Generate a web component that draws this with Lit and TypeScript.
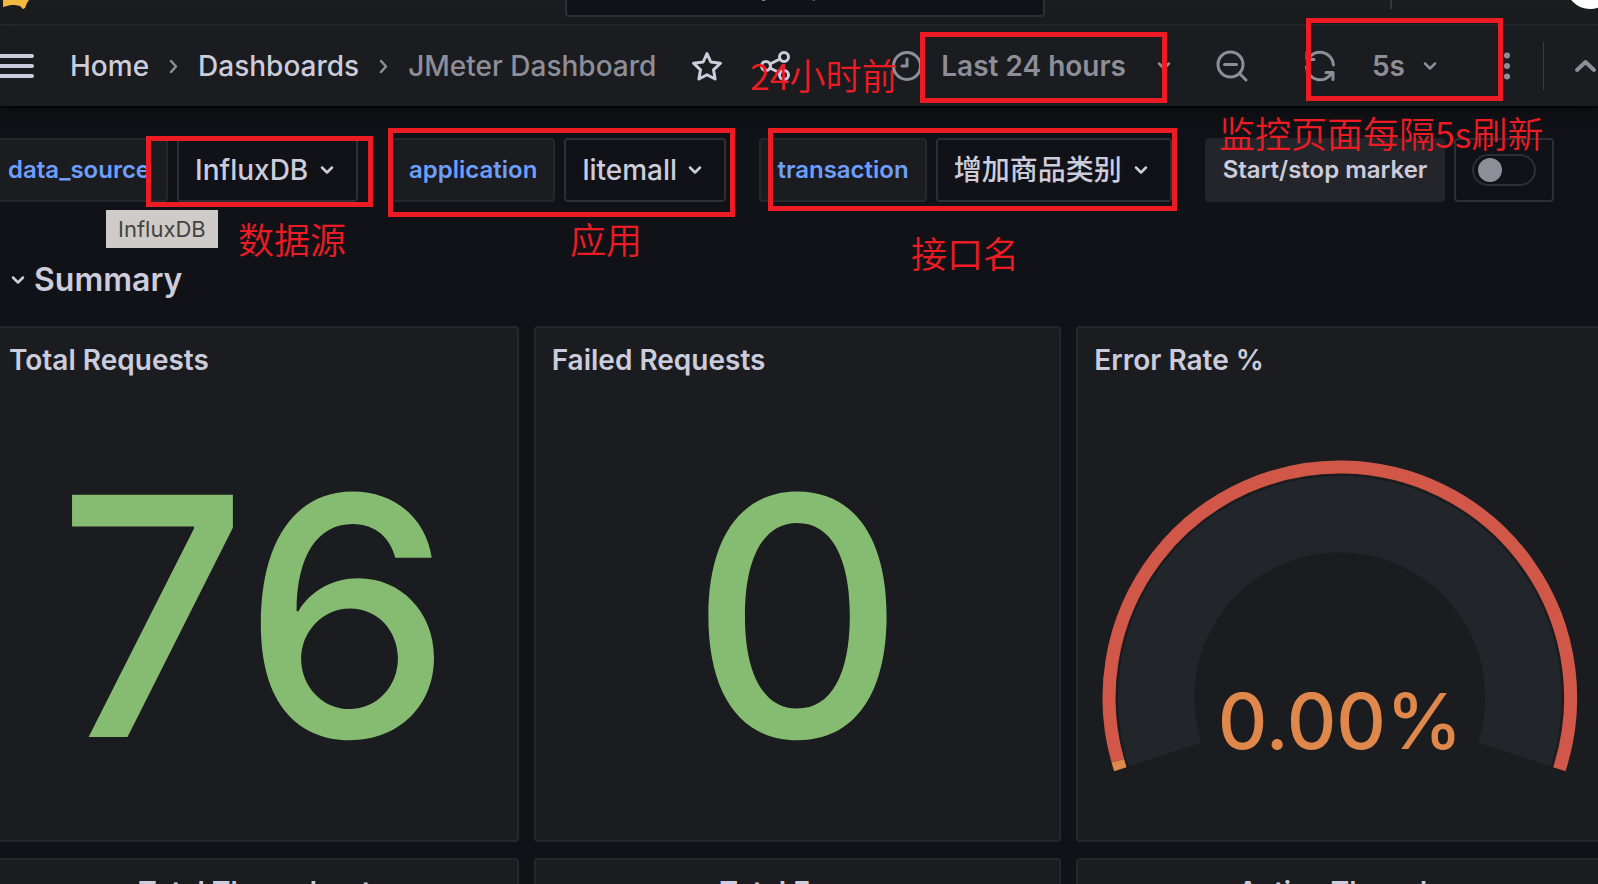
import { LitElement, html, svg, css } from "lit";
import { customElement } from "lit/decorators.js";

const arc = (cx: number, cy: number, r: number, from: number, to: number) => {
  const pt = (deg: number) => {
    const a = (deg * Math.PI) / 180;
    return `${(cx + r * Math.cos(a)).toFixed(2)} ${(cy - r * Math.sin(a)).toFixed(2)}`;
  };
  return `M${pt(from)}A${r} ${r} 0 ${from - to > 180 ? 1 : 0} 1 ${pt(to)}`;
};

const icons = {
  chevron: svg`<path d="M2 2.500l5 5 5-5"/>`,
  crumb: svg`<path d="M2 2l5 5.500-5 5.500"/>`,
};

const chevron = html`<svg class="chev" viewBox="0 0 14 10" aria-hidden="true">${icons.chevron}</svg>`;
const crumb = html`<svg class="crumb" viewBox="0 0 9 15" aria-hidden="true">${icons.crumb}</svg>`;

@customElement("error-gauge")
export class ErrorGauge extends LitElement {
  static styles = css`
    :host { display: block; position: relative; }
    svg { display: block; width: 100%; }
    .value {
      position: absolute; left: 0; right: 0; bottom: 12px;
      text-align: center; font-size: 77px; line-height: 80px; font-weight: 500; color: #e0884b;
    }
  `;
  render() {
    return html`
      <svg viewBox="0 0 474 312" aria-hidden="true" fill="none">
        <path d=${arc(237, 237, 183, 198, -18)} stroke="#222529" stroke-width="76" />
        <path d=${arc(237, 237, 230, 195.84, -18)} stroke="#d15849" stroke-width="13" />
        <path d=${arc(237, 237, 230, 198, 195.84)} stroke="#e0884b" stroke-width="13" />
      </svg>
      <div class="value">0.00%</div>
    `;
  }
}

@customElement("app-root")
export class AppRoot extends LitElement {
  static styles = css`
    :host {
      display: block; position: relative; height: 100vh; overflow: hidden;
      background: #111217; color: #ccccdc;
      font-family: Inter, "Noto Sans CJK SC", sans-serif;
      font-size: 28px; line-height: 36px; font-weight: 500;
    }
    * { box-sizing: border-box; }
    a { color: inherit; text-decoration: none; }
    button, select, input { font: inherit; color: inherit; margin: 0; }
    button { background: none; border: 0; padding: 0; display: flex; align-items: center; }
    svg { fill: none; stroke: currentColor; stroke-width: 3; stroke-linecap: round; stroke-linejoin: round; flex: none; display: block; }
    .grow { flex: 1; }
    .chev { width: 14px; height: 10px; stroke-width: 2.5; }
    .crumb { width: 9px; height: 15px; color: #8e8e99; stroke-width: 2.5; }
    .icon { width: 32px; height: 32px; }

    .top {
      height: 26px; background: #1b1c1f; border-bottom: 2px solid #292a2e;
      display: flex; align-items: flex-end; justify-content: space-between;
      overflow: hidden; padding-left: 1px;
    }
    .logo { width: 30px; height: 24px; stroke: none; }
    .search {
      width: 480px; height: 64px; margin-bottom: 7px; margin-left: 188px;
      background: #111217; border: 2px solid #2e2f34; border-radius: 4px;
      padding: 0 60px; font-weight: 400;
    }
    .search::placeholder { color: #8e8e99; opacity: 1; }
    .side { display: flex; align-items: flex-end; padding-bottom: 15px; margin-right: -16px; }
    .bar { width: 2px; height: 40px; background: #36373c; margin-right: 174px; }
    .avatar { width: 48px; height: 48px; border-radius: 50%; background: #fff; }

    .nav {
      height: 80px; background: #1b1c1f; display: flex; align-items: center;
      box-shadow: 0 1px 2px #000, 0 6px 16px rgba(0, 0, 0, 0.4);
      position: relative;
    }
    .menu { width: 36px; margin-right: 34px; }
    .menu svg { width: 36px; height: 24px; stroke-width: 4; }
    .crumbs { display: flex; align-items: center; gap: 20px; margin-right: 35px; }
    .current { color: #8e8e99; }
    .tools { display: flex; align-items: center; color: #8e8e99; font-weight: 600; }
    .fav { margin-right: 36px; }
    .range svg.icon { margin-right: 18px; }
    .range .chev { margin-left: 31px; }
    .zoom { margin-left: 45px; }
    .sync { margin-left: 56px; }
    .every { margin-left: 36px; gap: 18px; }
    .more { margin-left: 54px; }
    .dots { width: 32px; height: 32px; fill: currentColor; stroke: none; }
    .rule { width: 1px; height: 48px; background: #3a3b40; margin: 0 30px 0 20px; }
    .up { width: 24px; height: 14px; stroke-width: 4; }

    .vars { display: flex; gap: 33px; padding: 32px 0 0; margin-left: -10px; }
    .var { display: flex; gap: 9px; }
    .label {
      height: 64px; padding: 0 16px; display: flex; align-items: center; white-space: nowrap;
      font-size: 24px; font-weight: 600; color: #6e9fff;
      background: #1b1c1f; border: 2px solid #26272b; border-radius: 4px;
    }
    .marker { color: #ccccdc; background: #24252b; border-color: #24252b; }
    .pick { display: grid; align-items: center; justify-items: end; }
    .pick > * { grid-area: 1 / 1; }
    .pick .chev { margin-right: 24px; pointer-events: none; }
    .pick select {
      appearance: none; height: 64px; padding: 0 47px 0 16px;
      background: #111217; border: 2px solid #2e2f34; border-radius: 4px;
    }
    .switch {
      height: 64px; width: 100px; display: grid; place-items: center;
      border: 2px solid #2e2f34; border-radius: 4px;
    }
    .switch input {
      appearance: none; width: 64px; height: 32px; border: 2px solid #2e2f34; border-radius: 16px;
      display: flex; align-items: center; padding: 0 4px;
    }
    .switch input::before { content: ""; width: 24px; height: 24px; border-radius: 50%; background: #8e8e99; }

    .summary { margin: 60px 0 28px 11px; }
    .summary button { gap: 9px; }
    .summary h2 { margin: 0; font-size: 32px; line-height: 36px; font-weight: 600; }

    .grid { display: grid; grid-template-columns: repeat(3, 1fr); gap: 16px 15px; margin: 0 -6px 0 -9px; }
    .panel { background: #1b1c1f; border: 2px solid #26272b; border-radius: 4px; height: 516px; display: flex; flex-direction: column; }
    .panel h3 { margin: 0; padding: 14px 16px; font-size: 28px; line-height: 36px; font-weight: 600; }
    .centered { text-align: center; }
    .stat { flex: 1; display: grid; place-items: center; font-size: 333px; line-height: 400px; font-weight: 500; color: #86bc72; }
    error-gauge { margin: 68px 24px 0; }

    .box { position: absolute; border: 5px solid #ed1c24; pointer-events: none; }
    .note { position: absolute; color: #ed1c24; font: 350 36px/40px "Noto Sans CJK SC", sans-serif; white-space: nowrap; }
    .tip {
      position: absolute; left: 106px; top: 210px; padding: 0 12px; background: #cfcbc8; color: #434340;
      font-size: 22px; line-height: 38px; font-weight: 400;
    }
    .b1 { left: 146px; top: 136px; width: 227px; height: 71px; }
    .b2 { left: 388px; top: 128px; width: 347px; height: 89px; }
    .b3 { left: 768px; top: 128px; width: 409px; height: 83px; }
    .b4 { left: 920px; top: 32px; width: 247px; height: 71px; }
    .b5 { left: 1306px; top: 18px; width: 197px; height: 83px; }
    .n1 { left: 238px; top: 218px; }
    .n2 { left: 570px; top: 218px; }
    .n3 { left: 911px; top: 232px; }
    .n4 { left: 750px; top: 54px; }
    .n5 { left: 1219px; top: 112px; }
  `;

  private variable(id: string, value: string) {
    return html`<div class="var">
      <label class="label" for=${id}>${id}</label>
      <div class="pick">
        <select id=${id}><option>${value}</option></select>
        ${chevron}
      </div>
    </div>`;
  }

  render() {
    return html`
      <header>
        <div class="top">
          <svg class="logo" viewBox="0 0 30 24" aria-hidden="true">
            <path fill="#f2b840" d="M2 0H28L26 3 24 8 22 9 19 6 14 5 10 5 6 6 2 7Z" />
          </svg>
          <input class="search" type="text" placeholder="Search or jump to..." aria-label="Search" />
          <div class="side"><span class="bar"></span><span class="avatar"></span></div>
        </div>
        <div class="nav">
          <button class="menu" aria-label="Menu">
            <svg viewBox="0 0 36 24"><path d="M0 2H32M0 12H32M0 22H32" /></svg>
          </button>
          <nav class="crumbs" aria-label="Breadcrumbs">
            <a href="#home">Home</a>${crumb}<a href="#dashboards">Dashboards</a>${crumb}<span class="current">JMeter Dashboard</span>
          </nav>
          <button class="fav" aria-label="Favourite">
            <svg class="icon" viewBox="0 0 32 32"><path d="M16 3.500l3.800 8.500 9.700 1.200-7 6.600 1.600 9.200-8.100-4.300-8.100 4.300 1.600-9.200-7-6.600 9.700-1.200z" /></svg>
          </button>
          <button aria-label="Share">
            <svg class="icon" viewBox="0 0 32 32"><circle cx="7" cy="16" r="4.500"/><circle cx="25" cy="7" r="4.500"/><circle cx="25" cy="25" r="4.500"/><path d="M11 14l10-5M11 18l10 5" /></svg>
          </button>
          <div class="grow"></div>
          <div class="tools">
            <button class="range">
              <svg class="icon" viewBox="0 0 32 32"><circle cx="16" cy="16" r="13.500"/><path d="M16 9v7h-5" /></svg>
              Last 24 hours ${chevron}
            </button>
            <button class="zoom" aria-label="Zoom out">
              <svg class="icon" viewBox="0 0 32 32"><circle cx="14.500" cy="14.500" r="12.500"/><path d="M24 24l6 6M8.500 14.500h12" /></svg>
            </button>
            <button class="sync" aria-label="Refresh">
              <svg class="icon" viewBox="0 0 32 32"><path d="M29.500 15A13.500 13.500 0 0 0 4 9.500M3 2.500v7h7M2.500 17A13.500 13.500 0 0 0 28 22.500M29 29.500v-7h-7" /></svg>
            </button>
            <button class="every">5s ${chevron}</button>
            <button class="more" aria-label="More">
              <svg class="dots" viewBox="0 0 32 32"><circle cx="16" cy="5.500" r="3"/><circle cx="16" cy="16" r="3"/><circle cx="16" cy="26.500" r="3"/></svg>
            </button>
            <span class="rule"></span>
            <button aria-label="Collapse">
              <svg class="up" viewBox="0 0 24 14"><path d="M3 11l8.500-8 8.500 8" /></svg>
            </button>
          </div>
        </div>
      </header>

      <main>
        <div class="vars">
          ${this.variable("data_source", "InfluxDB")}
          ${this.variable("application", "litemall")}
          ${this.variable("transaction", "增加商品类别")}
          <div class="var">
            <label class="label marker" for="marker">Start/stop marker</label>
            <div class="switch"><input id="marker" type="checkbox" role="switch" /></div>
          </div>
        </div>

        <div class="summary"><button>${chevron}<h2>Summary</h2></button></div>

        <div class="grid">
          <section class="panel"><h3>Total Requests</h3><div class="stat">76</div></section>
          <section class="panel"><h3>Failed Requests</h3><div class="stat">0</div></section>
          <section class="panel"><h3>Error Rate %</h3><error-gauge></error-gauge></section>
          <section class="panel centered"><h3>Total Throughput</h3></section>
          <section class="panel centered"><h3>Total Errors</h3></section>
          <section class="panel centered"><h3>Active Threads</h3></section>
        </div>
      </main>

      <div class="tip" role="tooltip">InfluxDB</div>
      <div class="box b1"></div><div class="box b2"></div><div class="box b3"></div>
      <div class="box b4"></div><div class="box b5"></div>
      <div class="note n1">数据源</div>
      <div class="note n2">应用</div>
      <div class="note n3">接口名</div>
      <div class="note n4">24小时前</div>
      <div class="note n5">监控页面每隔5s刷新</div>
    `;
  }
}
